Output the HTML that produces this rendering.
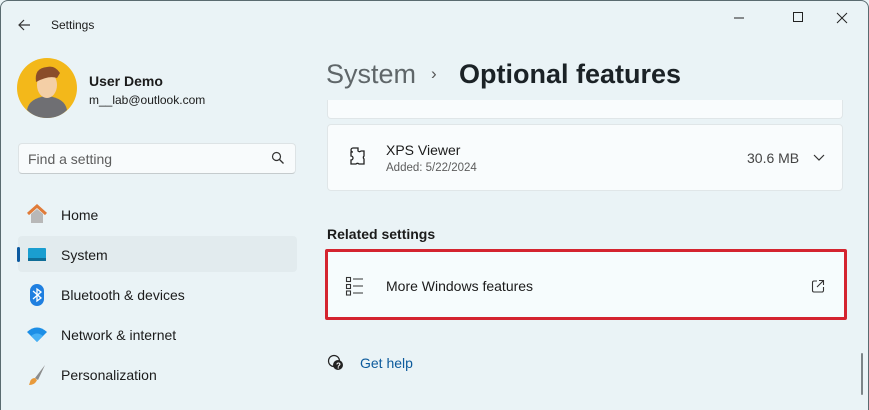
<!DOCTYPE html>
<html><head><style>
*{margin:0;padding:0;box-sizing:border-box}
body{width:869px;height:410px;overflow:hidden;background:#eaf3f6;font-family:"Liberation Sans",sans-serif;color:#1b1b1b;position:relative}
.a{position:absolute}
.nav{position:absolute;left:61px;font-size:14px}
</style></head><body>
<div class="a" style="left:0;top:0;width:869px;height:410px;border:1px solid #5a6b70;border-radius:8px 8px 0 0;border-bottom:none"></div>
<svg class="a" style="left:16px;top:17px" width="16" height="16"><path d="M14 8H3M8 3L3 8l5 5" stroke="#333" fill="none" stroke-width="1.2"/></svg>
<div class="a" style="left:51px;top:18px;font-size:12px">Settings</div>
<svg class="a" style="left:730px;top:10px" width="130" height="16"><path d="M4 8h10" stroke="#222"/><rect x="63.5" y="2.5" width="9" height="9" stroke="#222" fill="none"/><path d="M107 3l10 10M117 3l-10 10" stroke="#222"/></svg>
<svg class="a" style="left:17px;top:58px" width="60" height="60"><circle cx="30" cy="30" r="30" fill="#f3b81a"/><path d="M10 52q2-12 20-14q18 2 20 14q-8 8-20 8q-12 0-20-8z" fill="#6f6f73"/><ellipse cx="30" cy="27" rx="10" ry="13" fill="#f4cfa6"/><path d="M19 24q-2-14 11-15q8-2 13 6l-3 5q-8-3-21 4z" fill="#8a4d2a"/></svg>
<div class="a" style="left:89px;top:73px;font-size:14px;font-weight:bold">User Demo</div>
<div class="a" style="left:89px;top:93px;font-size:12px">m__lab@outlook.com</div>
<div class="a" style="left:18px;top:143px;width:278px;height:31px;background:#f8fbfc;border:1px solid #dde3e5;border-bottom-color:#c5cbcd;border-radius:4px"></div>
<div class="a" style="left:28px;top:151px;font-size:14px;color:#5d5d5d">Find a setting</div>
<svg class="a" style="left:271px;top:151px" width="14" height="14"><circle cx="5.5" cy="5.5" r="4" stroke="#333" fill="none" stroke-width="1.2"/><path d="M8.5 8.5L12.5 12.5" stroke="#333" stroke-width="1.3"/></svg>
<div class="a" style="left:18px;top:236px;width:279px;height:36px;background:#e2ebee;border-radius:4px"></div>
<div class="a" style="left:17px;top:247px;width:3px;height:15px;background:#0c5aa0;border-radius:2px"></div>
<svg class="a" style="left:26px;top:204px" width="22" height="20"><path d="M2 10L11 2l9 8" stroke="#e07b39" stroke-width="3" fill="none"/><path d="M5 10v9h12v-9l-6-5z" fill="#b8b8b8"/></svg>
<svg class="a" style="left:27px;top:247px" width="20" height="15"><rect x="1" y="1" width="18" height="13" rx="1" fill="#1a9ed0"/><rect x="1" y="11" width="18" height="3" fill="#0f6d97"/></svg>
<svg class="a" style="left:29px;top:283px" width="16" height="24"><rect x="1" y="1" width="14" height="22" rx="7" fill="#1f7fe0"/><path d="M4 8l8 7-4 3V6l4 3-8 7" stroke="#fff" fill="none" stroke-width="1.3"/></svg>
<svg class="a" style="left:26px;top:327px" width="22" height="16"><path d="M1 5q10-9 20 0l-10 10z" fill="#1c8ee6"/><path d="M5 9q6-5 12 0l-6 6z" fill="#47b0f5"/></svg>
<svg class="a" style="left:27px;top:364px" width="20" height="22"><path d="M18 1L8 14l3 2z" fill="#8c8c8c"/><path d="M8 14q-4 0-5 4l-1 3q6 0 8-5z" fill="#e89a3b"/></svg>
<div class="nav" style="top:207px">Home</div>
<div class="nav" style="top:247px">System</div>
<div class="nav" style="top:287px">Bluetooth &amp; devices</div>
<div class="nav" style="top:327px">Network &amp; internet</div>
<div class="nav" style="top:367px">Personalization</div>
<div class="a" style="left:326px;top:59px;font-size:27px;color:#5f6669">System</div>
<div class="a" style="left:431px;top:64px;font-size:17px;color:#555">›</div>
<div class="a" style="left:459px;top:59px;font-size:27px;font-weight:bold;color:#1b2226">Optional features</div>
<div class="a" style="left:327px;top:100px;width:516px;height:19px;background:#f9fcfd;border:1px solid #e0e6e8;border-top:none;border-radius:0 0 4px 4px"></div>
<div class="a" style="left:327px;top:124px;width:516px;height:67px;background:#f9fcfd;border:1px solid #e0e6e8;border-radius:4px"></div>
<svg class="a" style="left:345px;top:146px" width="22" height="22"><path d="M8 2h5v3a2 2 0 0 0 3 0h0l0 0h3v5a2 2 0 0 0 0 3v5h-5a2 2 0 0 0-3 0H6v-4a2 2 0 0 0 0-4V6h2a2 2 0 0 1 0-4z" stroke="#222" fill="none" stroke-width="1.3"/></svg>
<div class="a" style="left:386px;top:142px;font-size:14px">XPS Viewer</div>
<div class="a" style="left:386px;top:162px;font-size:11.5px;color:#5d5d5d">Added: 5/22/2024</div>
<div class="a" style="left:747px;top:150px;font-size:14px;color:#444">30.6 MB</div>
<svg class="a" style="left:812px;top:153px" width="14" height="10"><path d="M2 2l5 5 5-5" stroke="#333" fill="none" stroke-width="1.2"/></svg>
<div class="a" style="left:327px;top:226px;font-size:14px;font-weight:bold">Related settings</div>
<div class="a" style="left:325px;top:249px;width:522px;height:71px;background:#f6fcfd;border:3px solid #d4242f;border-radius:2px"></div>
<svg class="a" style="left:345px;top:276px" width="22" height="20"><g stroke="#333" fill="none" stroke-width="1.1"><rect x="1.5" y="1.5" width="4" height="4"/><rect x="1.5" y="8.5" width="4" height="4"/><rect x="1.5" y="15" width="4" height="4"/><path d="M8 3h10M8 10h10M8 17h10"/></g></svg>
<div class="a" style="left:386px;top:278px;font-size:14px">More Windows features</div>
<svg class="a" style="left:811px;top:279px" width="14" height="14"><path d="M6 2H3a1.5 1.5 0 0 0-1.5 1.5v8A1.5 1.5 0 0 0 3 13h8a1.5 1.5 0 0 0 1.5-1.5V8M8 1.5h4.5V6M12.5 1.5L6 8" stroke="#333" fill="none" stroke-width="1.1"/></svg>
<svg class="a" style="left:327px;top:354px" width="18" height="18"><circle cx="7" cy="7" r="5.5" stroke="#222" fill="none" stroke-width="1.2"/><circle cx="11" cy="11" r="5" fill="#222"/><text x="9" y="14.5" font-size="8" fill="#fff" font-family="Liberation Sans" font-weight="bold">?</text></svg>
<div class="a" style="left:360px;top:355px;font-size:14px;color:#0c5a9c">Get help</div>
<div class="a" style="left:861px;top:353px;width:2px;height:42px;background:#7b8487;border-radius:1px"></div>
</body></html>
